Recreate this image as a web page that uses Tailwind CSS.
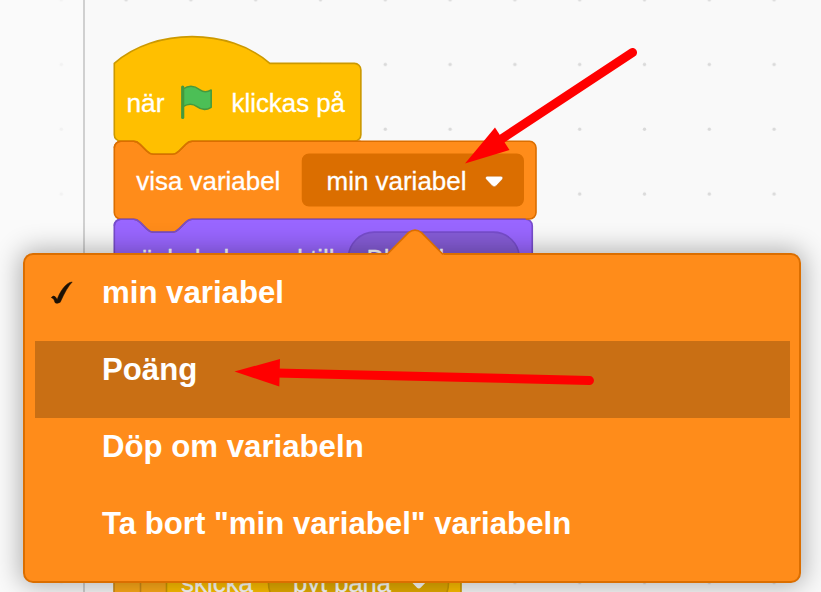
<!DOCTYPE html>
<html lang="sv">
<head>
<meta charset="utf-8">
<title>Scratch</title>
<script src="https://cdn.jsdelivr.net/npm/@tailwindcss/browser@4"></script>
</head>
<body class="bg-[#f9f9f9]">
<main class="relative w-[821px] h-[592px] overflow-hidden bg-[#f9f9f9] font-['Liberation_Sans',Arial,sans-serif]">
  <!-- Workspace with stacked blocks -->
  <svg class="absolute inset-0" width="821" height="592" viewBox="0 0 821 592">
    <defs>
      <pattern id="grid" x="28.9" y="-32.4" width="64.8" height="64.75" patternUnits="userSpaceOnUse">
        <circle cx="32.4" cy="32.2" r="1.7" fill="#dadada"/>
      </pattern>
    </defs>
    <rect width="821" height="592" fill="url(#grid)"/>
    <rect width="83" height="592" fill="#f9f9f9" fill-opacity=".75"/>
    <rect x="83" width="2" height="592" fill="#d0d0d0"/>

    <g stroke-width="1">
      <g transform="translate(114.3 219.2) scale(1.62)">
        <path fill="#9966ff" stroke="#774dcb" d="M0 4A4 4 0 0 1 4 0H12c2 0 3 1 4 2l4 4c1 1 2 2 4 2h12c2 0 3-1 4-2l4-4c1-1 2-2 4-2H254a4 4 0 0 1 4 4V44H0Z"/>
        <rect x="144.500" y="8" width="105.500" height="32" rx="16" fill="#855cd6" stroke="#774dcb"/>
      </g>
      <g transform="translate(114.3 141.3) scale(1.62)">
        <path fill="#ff8c1a" stroke="#db6e00" d="M0 4A4 4 0 0 1 4 0H12c2 0 3 1 4 2l4 4c1 1 2 2 4 2h12c2 0 3-1 4-2l4-4c1-1 2-2 4-2H256.300a4 4 0 0 1 4 4V44a4 4 0 0 1-4 4H48c-2 0-3 1-4 2l-4 4c-1 1-2 2-4 2H24c-2 0-3-1-4-2l-4-4c-1-1-2-2-4-2H4a4 4 0 0 1-4-4Z"/>
        <rect x="116.200" y="8" width="136.200" height="31.800" rx="4" fill="#db6e00" stroke="#db6e00"/>
      </g>
      <g transform="translate(114.3 63.4) scale(1.62)">
        <path fill="#ffbf00" stroke="#cc9900" d="M0 0C25-22 71-22 96 0H148.200a4 4 0 0 1 4 4V44a4 4 0 0 1-4 4H48c-2 0-3 1-4 2l-4 4c-1 1-2 2-4 2H24c-2 0-3-1-4-2l-4-4c-1-1-2-2-4-2H4a4 4 0 0 1-4-4Z"/>
      </g>
      <!-- Seams where one block sits on the next -->
      <path transform="translate(114.3 141.3) scale(1.62)" fill="none" stroke="#db6e00" d="M0 4A4 4 0 0 1 4 0H12c2 0 3 1 4 2l4 4c1 1 2 2 4 2h12c2 0 3-1 4-2l4-4c1-1 2-2 4-2H152"/>
      <path transform="translate(114.3 219.2) scale(1.62)" fill="none" stroke="#774dcb" d="M0 4A4 4 0 0 1 4 0H12c2 0 3 1 4 2l4 4c1 1 2 2 4 2h12c2 0 3-1 4-2l4-4c1-1 2-2 4-2H254"/>
    </g>

    <!-- Green flag -->
    <path d="M183 89c6-4 12-3 17 .8 4 3 7.500 2.200 11.200.2v17.300c-5 3-10 2.500-14.200-.7-4-3-9-3.100-14 0Z" fill="#4cbf56" stroke="#45993d" stroke-width="1.500" stroke-linejoin="round"/>
    <path d="M182.700 87v30.500" stroke="#45993d" stroke-width="3.200" stroke-linecap="round"/>

    <g fill="#fff" stroke="#fff" stroke-width=".3" font-size="25.900">
      <text x="126.500" y="111.800" textLength="38" lengthAdjust="spacingAndGlyphs">när</text>
      <text x="231.500" y="111.800" textLength="113.500" lengthAdjust="spacingAndGlyphs">klickas på</text>
      <text x="136.300" y="189.800" textLength="144" lengthAdjust="spacingAndGlyphs">visa variabel</text>
      <text x="326.500" y="189.800" textLength="140" lengthAdjust="spacingAndGlyphs">min variabel</text>
      <text x="127" y="267.800" textLength="207.500" lengthAdjust="spacingAndGlyphs">växla bakgrund till</text>
      <text x="366.500" y="267.800">Blue sky</text>
    </g>
    <path d="M488 176.200h12.500c2.500 0 2.800 2 1.600 3.400l-5.800 6.100q-2.100 2-4.200 0l-5.800-6.100c-1.300-1.400-1-3.400 1.700-3.400Z" fill="#fff" stroke="#bd5f00" stroke-opacity=".6" stroke-width=".8"/>

    <!-- Lower part of the script -->
    <g>
      <rect x="114" y="540" width="60" height="60" fill="#ffab19" stroke="#cf8b17" stroke-width="1.600"/>
      <rect x="140.500" y="540" width="40" height="60" fill="#ffab19" stroke="#cf8b17" stroke-width="1.600"/>
      <rect x="166.500" y="540" width="294.500" height="60" fill="#ffbf00" stroke="#cc9900" stroke-width="1.600"/>
      <rect x="268.500" y="557" width="180" height="52" rx="26" fill="#e6ac00" stroke="#cc9900" stroke-width="1.600"/>
      <g fill="#fff" stroke="#fff" stroke-width=".3" font-size="25.900">
        <text x="181" y="591.500" textLength="72" lengthAdjust="spacingAndGlyphs">skicka</text>
        <text x="293" y="591.500" textLength="98" lengthAdjust="spacingAndGlyphs">byt bana</text>
      </g>
      <path d="M413 578h12c2.500 0 2.800 2 1.600 3.400l-5.800 6.100q-2 2-4 0l-5.800-6.100c-1.300-1.400-1-3.400 2-3.400Z" fill="#fff"/>
    </g>
  </svg>

  <!-- Variable menu -->
  <div class="absolute left-[23px] top-[253px] w-[778px] h-[330px] box-border flex flex-col rounded-[10px] border-2 border-[#db6e00] bg-[#ff8c1a] pl-[10px] pr-[9px] py-[9px] text-[31.2px] font-bold leading-[36px] text-white shadow-[0_0_26px_3px_rgba(0,0,0,0.3)]">
    <div class="flex h-[77px] pl-[67px] pt-[11px]">min variabel</div>
    <div class="flex h-[77px] bg-[#c96f14] pl-[67px] pt-[11px]">Poäng</div>
    <div class="flex h-[77px] pl-[67px] pt-[11px]">Döp om variabeln</div>
    <div class="flex h-[77px] pl-[67px] pt-[11px]">Ta bort "min variabel" variabeln</div>
  </div>

  <!-- Menu pointer, check mark and annotation arrows -->
  <svg class="absolute inset-0" width="821" height="592" viewBox="0 0 821 592">
    <path d="M386 256V255L408.500 232.500q6.500-5 13 0L444 255V256Z" fill="#ff8c1a"/>
    <path d="M387 254.500L408.500 232.700q6.500-5 13 0L443 254.500" fill="none" stroke="#db6e00" stroke-width="1.700"/>
    <path d="M51.300 297.500q2.500-2.500 4.200-.5l1.700 2.600c2-6.500 8.500-17.500 15-17.600q-5.200 5-12 20.300-3.500 2-5.200.2c-.6-2.500-1.700-4.300-3.700-5Z" fill="#1c1105" stroke="#1c1105" stroke-opacity=".6" stroke-width=".9"/>
    <g fill="#ff0000" stroke="#ff0000">
      <path d="M632.500 52.500L500 140" fill="none" stroke-width="9" stroke-linecap="round"/>
      <path d="M465 163.500L495 127.500 509.500 150Z" stroke="none"/>
      <path d="M589.500 380.500L276 373" fill="none" stroke-width="9" stroke-linecap="round"/>
      <path d="M234.500 371.500L280 359 279.300 386.500Z" stroke="none"/>
    </g>
  </svg>
</main>
</body>
</html>
